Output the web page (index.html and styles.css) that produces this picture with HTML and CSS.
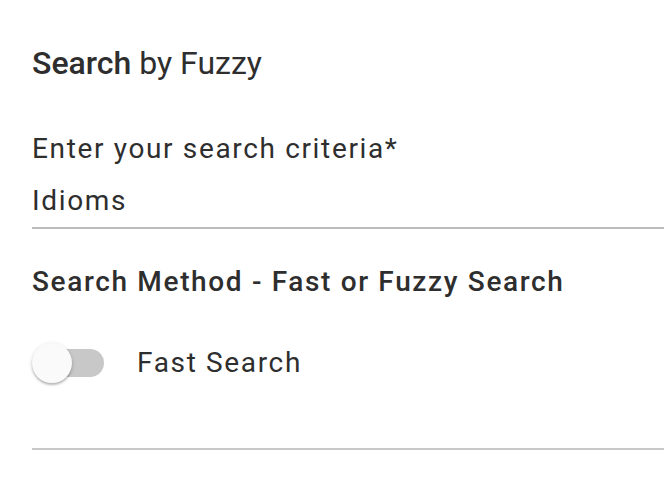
FILE: index.html
```html
<!DOCTYPE html>
<html>
<head>
<meta charset="utf-8">
<link rel="stylesheet" href="styles.css">
</head>
<body>
<div class="form">
  <h2 class="title"><strong>Search</strong> by Fuzzy</h2>
  <div class="field">
    <label class="label">Enter your search criteria*</label>
    <div class="input">Idioms</div>
  </div>
  <h3 class="method">Search Method - Fast or Fuzzy Search</h3>
  <div class="switch-row">
    <span class="switch"><span class="track"></span><span class="thumb"></span></span>
    <span class="switch-label">Fast Search</span>
  </div>
  <div class="divider"></div>
</div>
</body>
</html>
```
FILE: styles.css
```css
html, body {
  margin: 0;
  padding: 0;
  background: #fff;
}
body {
  font-family: Roboto, "Liberation Sans", sans-serif;
  color: #2e2e2e;
}
.form {
  padding: 43px 0 0 32px;
}
.title {
  margin: 0;
  font-size: 32px;
  line-height: 40px;
  font-weight: 400;
}
.title strong {
  font-weight: 500;
}
.field {
  margin-top: 50px;
}
.label,
.input,
.method,
.switch-label {
  font-size: 28px;
  line-height: 32px;
  letter-spacing: 1.65px;
}
.label {
  display: block;
}
.input {
  margin-top: 20px;
  padding-bottom: 10px;
  border-bottom: 2px solid #bdbdbd;
}
.method {
  margin: 37px 0 0;
  font-weight: 500;
}
.switch-row {
  margin-top: 45px;
  display: flex;
  align-items: center;
  height: 40px;
}
.switch {
  position: relative;
  width: 72px;
  height: 40px;
  flex: none;
}
.track {
  position: absolute;
  left: 4px;
  top: 6px;
  width: 68px;
  height: 28px;
  border-radius: 14px;
  background: #c8c8c8;
}
.thumb {
  position: absolute;
  left: 0;
  top: 0;
  width: 40px;
  height: 40px;
  border-radius: 50%;
  background: #fafafa;
  box-shadow: 0 2px 2px rgba(0,0,0,0.2), 0 1px 4px rgba(0,0,0,0.14);
}
.switch-label {
  margin-left: 33px;
}
.divider {
  margin-top: 65px;
  height: 2px;
  background: #c8c8c8;
}
```
